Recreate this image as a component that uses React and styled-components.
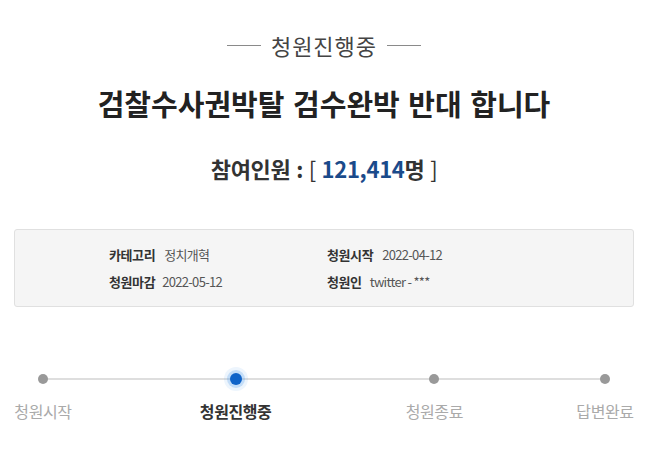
import React from "react";
import styled, { createGlobalStyle } from "styled-components";

const Global = createGlobalStyle`
  html, body { margin: 0; padding: 0; background: #fff; }
  body { font-family: "Noto Sans CJK KR", "Noto Sans", sans-serif; }
  * { box-sizing: border-box; }
`;

const Page = styled.div`
  width: 650px;
  height: 460px;
  padding: 30px 16px 0 14px;
  overflow: hidden;
`;

const Status = styled.div`
  display: flex;
  justify-content: center;
  align-items: center;
  gap: 10px;
  height: 30px;
  font-size: 22px;
  line-height: 30px;
  color: #444;
  letter-spacing: 1px;
`;

const Rule = styled.span`
  display: block;
  width: 34px;
  height: 1px;
  background: #8a8a8a;
`;

const Title = styled.h1`
  margin: 23px 0 0;
  height: 40px;
  text-align: center;
  font-size: 29px;
  line-height: 40px;
  font-weight: 700;
  color: #222;
  letter-spacing: 0;
  word-spacing: 2px;
`;

const Count = styled.div`
  margin-top: 30px;
  height: 30px;
  text-align: center;
  font-size: 22px;
  line-height: 30px;
  font-weight: 700;
  color: #333;
  letter-spacing: -0.3px;
  word-spacing: 1px;
`;

const Bracket = styled.span`
  font-weight: 400;
  color: #333;
`;

const Num = styled.span`
  color: #1a4a8a;
`;

const InfoBox = styled.div`
  margin-top: 46px;
  height: 78px;
  border: 1px solid #e0e0e0;
  border-radius: 3px;
  background: #f5f5f5;
  padding: 15px 0 0 94px;
  display: grid;
  grid-template-columns: 218px 218px;
  grid-auto-rows: 20px;
  row-gap: 7px;
`;

const Item = styled.div`
  display: flex;
  align-items: center;
  font-size: 13px;
  line-height: 20px;
  letter-spacing: -0.4px;
`;

const Label = styled.span`
  font-weight: 700;
  color: #333;
  margin-right: ${(p) => p.$gap || 9}px;
`;

const Value = styled.span`
  color: #555;
  font-weight: 400;
  letter-spacing: -0.7px;
`;

const Steps = styled.div`
  position: relative;
  margin-top: 61px;
  display: flex;
  justify-content: space-between;
  &::before {
    content: "";
    position: absolute;
    top: 10px;
    left: 29px;
    right: 29px;
    height: 2px;
    background: #dedede;
  }
`;

const Step = styled.div`
  position: relative;
  width: ${(p) => p.$w}px;
  display: flex;
  flex-direction: column;
  align-items: center;
`;

const DotWrap = styled.div`
  height: 22px;
  width: 22px;
  display: flex;
  align-items: center;
  justify-content: center;
`;

const Dot = styled.span`
  display: block;
  border-radius: 50%;
  width: ${(p) => (p.$active ? 12 : 10)}px;
  height: ${(p) => (p.$active ? 12 : 10)}px;
  background: ${(p) => (p.$active ? "#0f63c8" : "#999")};
  box-shadow: ${(p) =>
    p.$active ? "0 0 0 3px rgba(70,150,235,0.25), 0 0 0 6px rgba(110,170,240,0.12)" : "none"};
`;

const StepLabel = styled.div`
  margin-top: 10px;
  font-size: 16px;
  line-height: 22px;
  white-space: nowrap;
  letter-spacing: -0.4px;
  color: ${(p) => (p.$active ? "#333" : "#aaa")};
  font-weight: ${(p) => (p.$active ? 700 : 400)};
`;

const steps = [
  { label: "청원시작", w: 58 },
  { label: "청원진행중", w: 114, active: true },
  { label: "청원종료", w: 70 },
  { label: "답변완료", w: 58 },
];

export default function App() {
  return (
    <>
      <Global />
      <Page>
        <Status>
          <Rule />
          청원진행중
          <Rule />
        </Status>
        <Title>검찰수사권박탈 검수완박 반대 합니다</Title>
        <Count>
          참여인원 : <Bracket>[</Bracket> <Num>121,414</Num>명 <Bracket>]</Bracket>
        </Count>
        <InfoBox>
          <Item>
            <Label>카테고리</Label>
            <Value>정치개혁</Value>
          </Item>
          <Item>
            <Label>청원시작</Label>
            <Value>2022-04-12</Value>
          </Item>
          <Item>
            <Label $gap={7}>청원마감</Label>
            <Value>2022-05-12</Value>
          </Item>
          <Item>
            <Label $gap={8}>청원인</Label>
            <Value>twitter - ***</Value>
          </Item>
        </InfoBox>
        <Steps>
          {steps.map((s) => (
            <Step key={s.label} $w={s.w}>
              <DotWrap>
                <Dot $active={s.active} />
              </DotWrap>
              <StepLabel $active={s.active}>{s.label}</StepLabel>
            </Step>
          ))}
        </Steps>
      </Page>
    </>
  );
}
